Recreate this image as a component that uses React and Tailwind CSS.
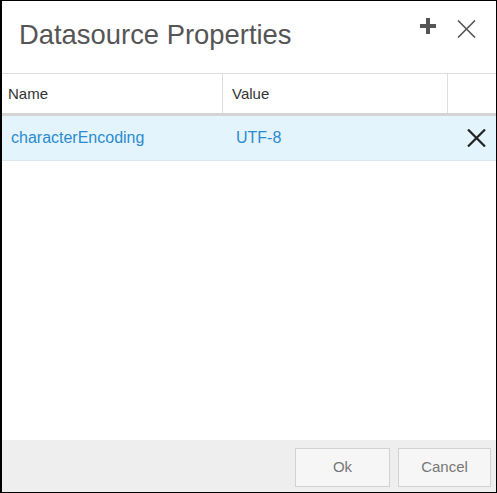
import React from "react";

const font = { fontFamily: '"Liberation Sans", Arial, sans-serif' };

function PlusIcon() {
  return (
    <svg width="18" height="16" viewBox="0 0 18 16">
      <path d="M9 0v16M1 8h16" stroke="#555" strokeWidth="4" />
    </svg>
  );
}

function CloseIcon({ color = "#555", width = 1.6 }) {
  return (
    <svg width="19" height="18" viewBox="0 0 19 18">
      <path d="M1 0.5L18 17.5M18 0.5L1 17.5" stroke={color} strokeWidth={width} />
    </svg>
  );
}

export default function App() {
  return (
    <div
      className="w-[497px] h-[493px] flex flex-col bg-white border border-black border-l-2"
      style={font}
    >
      <div className="h-[72px] flex items-start justify-between">
        <h1 className="pl-[17px] pt-[17px] text-[27.4px] leading-[34px] text-[#555]">
          Datasource Properties
        </h1>
        <div className="flex items-start gap-[20px] pr-[20px]">
          <button className="mt-[17px]">
            <PlusIcon />
          </button>
          <button className="mt-[19px]">
            <CloseIcon />
          </button>
        </div>
      </div>

      <div className="flex h-[43px] border-t border-[#dddddd] border-b-[3px] border-b-[#d4d4d4] text-[15px] text-[#333]">
        <div className="w-[221px] border-r border-[#dddddd] pl-[6px] pt-[2px] flex items-center">Name</div>
        <div className="w-[225px] border-r border-[#dddddd] pl-[9px] pt-[2px] flex items-center">Value</div>
        <div className="flex-1" />
      </div>

      <div className="flex h-[45px] bg-[#e4f4fd] border-b border-[#dde6ea] text-[16px] text-[#2b8bd0]">
        <div className="w-[221px] pl-[9px] flex items-center">characterEncoding</div>
        <div className="w-[225px] pl-[13px] flex items-center">UTF-8</div>
        <div className="flex-1 flex items-center justify-end pr-[10px]">
          <button>
            <CloseIcon color="#222" width={2.2} />
          </button>
        </div>
      </div>

      <div className="flex-1" />

      <div className="h-[52px] bg-[#eeeeee] flex items-start justify-end gap-[8px] pr-[5px] pt-[8px]">
        <button className="w-[95px] h-[39px] bg-[#f6f6f6] border border-[#d2d2d2] text-[15px] text-[#777]">
          Ok
        </button>
        <button className="w-[93px] h-[39px] bg-[#f6f6f6] border border-[#d2d2d2] text-[15px] text-[#777]">
          Cancel
        </button>
      </div>
    </div>
  );
}
